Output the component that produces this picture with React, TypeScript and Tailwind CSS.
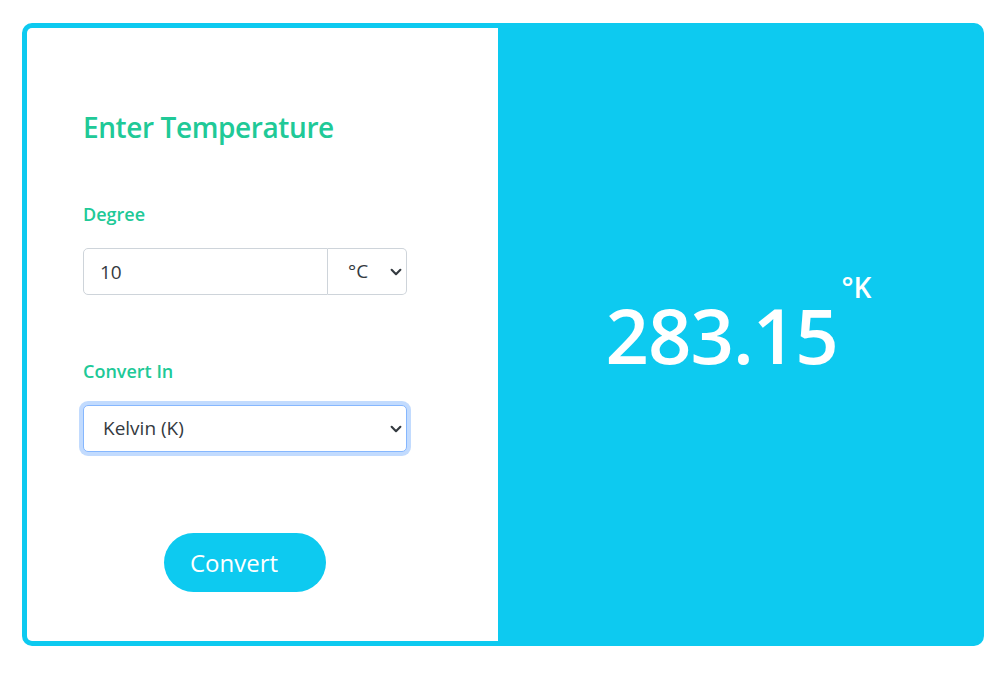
import React, { useState } from 'react';

const Chevron: React.FC<{ className?: string }> = ({ className }) => (
  <svg viewBox="0 0 16 16" className={className} fill="none" stroke="#343a40" strokeWidth="2.4" strokeLinecap="round" strokeLinejoin="round">
    <path d="m3 5.5 5 5 5-5" />
  </svg>
);

const toKelvin = (v: number, unit: string) => {
  if (unit === 'F') return (v - 32) * 5 / 9 + 273.15;
  if (unit === 'K') return v;
  return v + 273.15;
};

const App: React.FC = () => {
  const [degree, setDegree] = useState('10');
  const [unit, setUnit] = useState('C');
  const [target, setTarget] = useState('K');

  const result = toKelvin(parseFloat(degree) || 0, unit);

  return (
    <div className="min-h-screen bg-white pt-[23px] pl-[22px]" style={{ fontFamily: '"Open Sans", "Noto Sans", sans-serif' }}>
      <div className="w-[962px] h-[623px] flex border-[5px] border-[#0dcaf0] bg-[#0dcaf0] rounded-[10px] overflow-hidden">
        {/* left form */}
        <div className="w-[471px] bg-white flex flex-col pl-[56px] pt-[81px]">
          <h3 className="text-[28px] leading-[36px] font-semibold text-[#20c997] tracking-[-0.4px]">Enter Temperature</h3>

          <label className="mt-[57px] text-[18px] leading-[24px] font-semibold text-[#20c997]">Degree</label>
          <div className="mt-[22px] flex w-[324px] h-[47px]">
            <input
              type="text"
              value={degree}
              onChange={(e) => setDegree(e.target.value)}
              className="w-[245px] h-full border border-[#ced4da] rounded-l-[5px] pl-[16px] text-[19px] text-[#343a40] outline-none"
            />
            <div className="relative w-[79px] h-full">
              <select
                value={unit}
                onChange={(e) => setUnit(e.target.value)}
                className="w-full h-full appearance-none border border-l-0 border-[#ced4da] rounded-r-[5px] pl-[20px] text-[19px] text-[#343a40] bg-white outline-none"
              >
                <option value="C">°C</option>
                <option value="F">°F</option>
                <option value="K">°K</option>
              </select>
              <Chevron className="absolute right-[4px] top-[17px] w-[14px] h-[14px] pointer-events-none" />
            </div>
          </div>

          <label className="mt-[64px] text-[18px] leading-[24px] font-semibold text-[#20c997]">Convert In</label>
          <div className="relative mt-[22px] w-[324px] h-[47px]">
            <select
              value={target}
              onChange={(e) => setTarget(e.target.value)}
              className="w-full h-full appearance-none border border-[#86b7fe] rounded-[5px] pl-[19px] text-[19px] text-[#343a40] bg-white outline-none shadow-[0_0_0_4px_rgba(13,110,253,0.25)]"
            >
              <option value="K">Kelvin (K)</option>
              <option value="C">Celsius (C)</option>
              <option value="F">Fahrenheit (F)</option>
            </select>
            <Chevron className="absolute right-[4px] top-[17px] w-[14px] h-[14px] pointer-events-none" />
          </div>

          <button className="mt-[81px] ml-[81px] w-[162px] h-[59px] rounded-full bg-[#0dcaf0] text-white text-[24px] text-left pl-[26px]">
            Convert
          </button>
        </div>

        {/* right result */}
        <div className="flex-1 flex items-center justify-center text-white">
          <div className="flex items-start">
            <span className="text-[76px] leading-none font-semibold tracking-[-1px]">{result.toFixed(2)}</span>
            <span className="text-[28px] leading-none font-semibold ml-[4px] -mt-[24px]">°{target}</span>
          </div>
        </div>
      </div>
    </div>
  );
};

export default App;
